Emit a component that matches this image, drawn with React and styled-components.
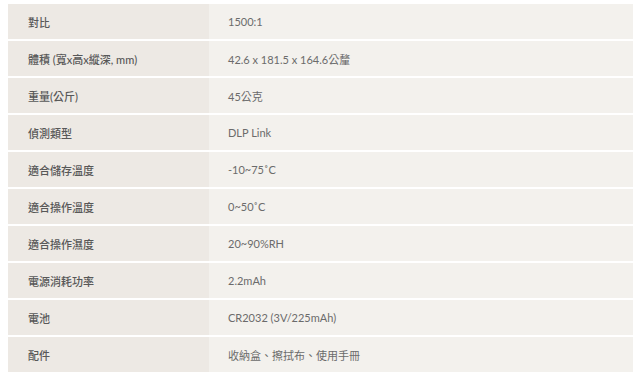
import React from 'react';
import styled, { createGlobalStyle } from 'styled-components';

const GlobalStyle = createGlobalStyle`
  html, body {
    margin: 0;
    padding: 0;
    background: #ffffff;
  }
  body {
    font-family: Lato, "Noto Sans CJK TC", sans-serif;
  }
`;

const Page = styled.div`
  padding: 4px 6px 0 8px;
`;

const SpecTable = styled.div`
  display: grid;
  grid-template-columns: 201px 1fr;
  row-gap: 2px;
  width: 625px;
`;

const Cell = styled.div`
  height: 35px;
  display: flex;
  align-items: center;
  padding-left: ${props => (props.label ? '20px' : '19px')};
  background: ${props => (props.label ? '#ede9e4' : '#f3f1ed')};
  color: ${props => (props.label ? '#585858' : '#6b6b6b')};
  font-weight: ${props => (props.label ? 500 : 400)};
  font-size: 11px;
  white-space: nowrap;
`;

const specs = [
  ['對比', '1500:1'],
  ['體積 (寬x高x縱深, mm)', '42.6 x 181.5 x 164.6公釐'],
  ['重量(公斤)', '45公克'],
  ['偵測類型', 'DLP Link'],
  ['適合儲存溫度', '-10~75˚C'],
  ['適合操作溫度', '0~50˚C'],
  ['適合操作濕度', '20~90%RH'],
  ['電源消耗功率', '2.2mAh'],
  ['電池', 'CR2032 (3V/225mAh)'],
  ['配件', '收納盒、擦拭布、使用手冊'],
];

export default function App() {
  return (
    <>
      <GlobalStyle />
      <Page>
        <SpecTable>
          {specs.map(([label, value]) => (
            <React.Fragment key={label}>
              <Cell label>{label}</Cell>
              <Cell>{value}</Cell>
            </React.Fragment>
          ))}
        </SpecTable>
      </Page>
    </>
  );
}
